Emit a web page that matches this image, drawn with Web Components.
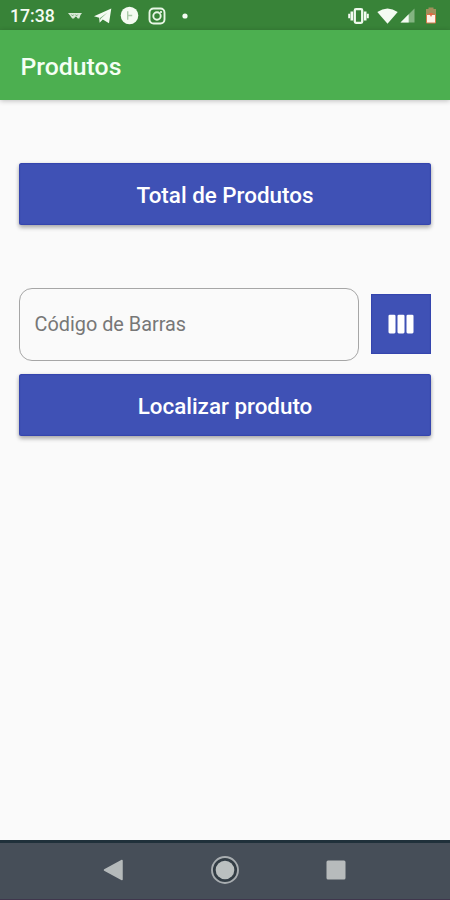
<!DOCTYPE html>
<html lang="pt-BR">
<head>
<meta charset="utf-8">
<title>Produtos</title>
<style>
html,body{margin:0;height:100%}
body{font-family:Roboto,"Liberation Sans",sans-serif;background:#fafafa;overflow:hidden}
</style>
</head>
<body>
<produtos-screen></produtos-screen>
<script>
const define = (name, html) => customElements.define(name, class extends HTMLElement {
  constructor() {
    super();
    this.attachShadow({mode: 'open'}).innerHTML = html;
  }
});

define('status-bar', `<style>
:host{display:flex;align-items:center;justify-content:space-between;height:30px;box-sizing:border-box;padding:1px 13px 0 10px;background:#388338;color:#f4fbf2}
.side{display:flex;align-items:center}
time{font-size:17.7px;line-height:30px;font-weight:500;width:45px;white-space:nowrap}
svg{display:block;fill:#f4fbf2}
</style>
<div class="side">
<time>17:38</time>
<svg style="margin-left:13px" width="14" height="8" viewBox="0 0 14 8"><path d="M0 1h14l-1.500 2-1.200 3.500H9.800L8.400 4.800H7.300L6 6.500H4.200L2 3.600Z" opacity=".85"/><path d="M3.500 2.500l1.100 1.500L5.700 2.500M7.500 2.500l1.100 1.500 1.200-1.500" fill="none" stroke="#388338" stroke-width=".5"/></svg>
<svg style="margin-left:12px" width="18" height="16" viewBox="0 0 18 16"><path d="M17.300.5 15 15.200 8.800 11.500 5.600 14.800 5.200 9.800 0 8.200Z"/><path d="M13.500 4.500 6 9.900 6.200 12 7.200 10.300Z" fill="#75ad73"/></svg>
<svg style="margin-left:8px" width="19" height="19" viewBox="0 0 19 19"><circle cx="9.500" cy="9.500" r="8.800"/><path d="M7.700 5.300v8.400M7.700 9.500h4.500" fill="none" stroke="#a9cba8" stroke-width="1.400"/></svg>
<svg style="margin-left:9px" width="18" height="18" viewBox="0 0 18 18"><g fill="none" stroke="#e8f7e5" stroke-width="1.900"><rect x="1.500" y="1.500" width="15" height="15" rx="4"/><circle cx="9" cy="9" r="3.700"/></g><circle cx="13" cy="5" r="1.100"/></svg>
<svg style="margin-left:16px" width="6" height="6" viewBox="0 0 6 6"><circle cx="3" cy="3" r="2.600"/></svg>
</div>
<div class="side">
<svg width="21" height="16" viewBox="0 0 21 16"><rect x="6.800" y="1.200" width="7.400" height="13.600" rx="1.200" fill="none" stroke="#eef9ec" stroke-width="2.300"/><path d="M2.500 3.500h2.600v9H2.500zM.2 5.800h1.900v4.400H.2zM15.900 3.500h2.600v9h-2.600zM18.900 5.800h1.900v4.400h-1.900z"/></svg>
<svg style="margin-left:8px" width="21" height="16" viewBox="0 0 21 16"><path d="M.3 4.100Q10.500-3.300 20.700 4.100L10.500 15.700Z"/></svg>
<svg style="margin-left:2px" width="15" height="15" viewBox="0 0 15 15"><path d="M14.500.5v14H.5Z" fill="#83b481"/><path d="M8.700 6.300v8.200H.5Z"/></svg>
<svg style="margin-left:10px" width="12" height="17" viewBox="0 0 12 17"><path d="M3.500 2V.5h5V2H11v6H1V2Z" fill="#a0905b"/><path d="M1.500 7.500h9V16h-9Z" fill="#fff3e8" stroke="#d2794a" stroke-width="1"/><path d="M4 6 6 10 8 6Z" fill="#df6844"/></svg>
</div>`);

define('app-bar', `<style>
:host{display:flex;align-items:center;height:70px;padding:3px 20.500px 0;box-sizing:border-box;background:#4caf50;color:#f5fff3;font-size:24.800px;font-weight:500;box-shadow:0 1px 5px rgba(0,0,0,.24);position:relative}
</style><slot></slot>`);

define('raised-button', `<style>
:host{display:flex;align-items:center;justify-content:center;height:62px;padding-top:2px;box-sizing:border-box;border-radius:2.500px;background:#3f51b5;color:#fff;font-size:22.400px;font-weight:500;box-shadow:inset 0 0 1px 1px rgba(35,45,160,.35),0 3px 4px rgba(0,0,0,.24),0 1px 4px rgba(0,0,0,.14)}
</style><slot></slot>`);

define('outlined-field', `<style>
:host{display:flex;align-items:center;flex:1;height:73px;box-sizing:border-box;padding:0 14.500px;border:1px solid #a6a6a6;border-radius:13px;color:#777;font-size:19.850px}
</style><slot></slot>`);

define('scan-button', `<style>
:host{display:flex;align-items:center;justify-content:center;width:60px;height:60px;margin-bottom:1px;background:#3f51b5;box-shadow:inset 0 0 1px 1px rgba(35,45,160,.35)}
</style><svg width="26" height="20" viewBox="0 0 26 20" fill="#fff"><rect x=".5" y=".8" width="7" height="18.600" rx="1.300"/><rect x="9.500" y=".8" width="7" height="18.600" rx="1.300"/><rect x="18.500" y=".8" width="7" height="18.600" rx="1.300"/></svg>`);

define('nav-bar', `<style>
:host{display:grid;grid-template-columns:repeat(3,111px);justify-content:center;place-items:center;height:60px;box-sizing:border-box;border-top:3px solid #1f303a;border-bottom:1px solid #40364d;padding-bottom:2px;background:#464e58}
svg{display:block}
</style>
<svg width="22" height="24" viewBox="0 0 22 24"><path d="M1.500 12 19 2.500v19Z" fill="#b5babb" stroke="#b5babb" stroke-width="1.500" stroke-linejoin="round"/></svg>
<svg width="30" height="30" viewBox="0 0 30 30"><circle cx="15" cy="15" r="13" fill="#333d45" stroke="#a8adb0" stroke-width="1.900"/><circle cx="15" cy="15" r="9.300" fill="#bbc0c0"/></svg>
<svg width="20" height="20" viewBox="0 0 20 20"><rect x=".5" y=".5" width="19" height="19" rx="1.500" fill="#b7bbbc"/></svg>`);

define('produtos-screen', `<style>
:host{display:flex;flex-direction:column;height:100vh;background:#fafafa}
main{flex:1;padding:63px 19px 0;display:flex;flex-direction:column}
.row{display:flex;align-items:center;gap:12px;margin:63px 0 13px}
</style>
<status-bar></status-bar>
<app-bar>Produtos</app-bar>
<main>
<raised-button>Total de Produtos</raised-button>
<div class="row"><outlined-field>Código de Barras</outlined-field><scan-button></scan-button></div>
<raised-button>Localizar produto</raised-button>
</main>
<nav-bar></nav-bar>`);
</script>
</body>
</html>
